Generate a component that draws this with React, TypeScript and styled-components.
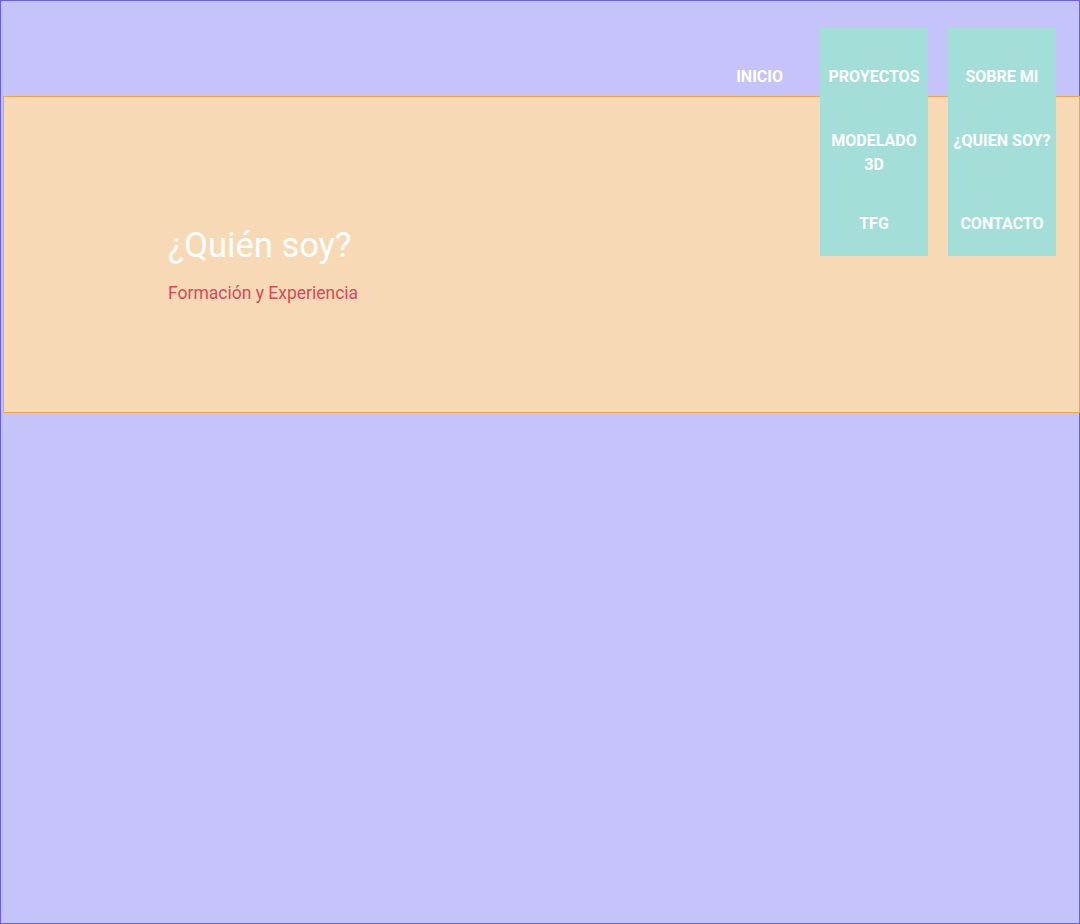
import React from 'react';
import styled, { createGlobalStyle } from 'styled-components';

const GlobalStyle = createGlobalStyle`
  html, body {
    margin: 0;
    padding: 0;
  }
  body {
    font-family: Roboto, "Liberation Sans", Arial, sans-serif;
    background: #c6c2fa;
  }
  * {
    box-sizing: border-box;
  }
`;

const Page = styled.div`
  width: 1080px;
  height: 924px;
  border: 1px solid #6a5cf6;
  background: #c6c2fa;
`;

const Header = styled.header`
  height: 95px;
  position: relative;
  z-index: 2;
`;

const Nav = styled.nav`
  display: flex;
  justify-content: flex-end;
  align-items: flex-start;
  gap: 20px;
  padding: 27px 23px 0 0;
`;

const NavLink = styled.a`
  display: block;
  color: #fff;
  font-weight: 700;
  font-size: 16px;
  line-height: 24px;
  text-align: center;
  text-decoration: none;
  cursor: pointer;
`;

const PlainItem = styled.div`
  padding-top: 37px;
  margin-right: 17px;
`;

const Dropdown = styled.div`
  width: 108px;
  height: 228px;
  background: #a3dfd8;
  display: grid;
  grid-template-rows: 64px 83px 24px;
  padding: 37px 0 20px;
`;

const Hero = styled.section`
  margin-left: 2px;
  width: 1077px;
  height: 317px;
  background: #f7dab5;
  border: 1px solid #f0a443;
  padding: 128px 0 0 164px;
`;

const Title = styled.h1`
  margin: 0;
  color: #fff;
  font-weight: 400;
  font-size: 34.5px;
  line-height: 40px;
`;

const Subtitle = styled.p`
  margin: 17px 0 0;
  color: #d9485c;
  font-size: 17.5px;
  line-height: 22px;
`;

const menus = [
  { label: 'PROYECTOS', items: ['MODELADO 3D', 'TFG'] },
  { label: 'SOBRE MI', items: ['¿QUIEN SOY?', 'CONTACTO'] },
];

const App: React.FC = () => {
  return (
    <Page>
      <GlobalStyle />
      <Header>
        <Nav>
          <PlainItem>
            <NavLink>INICIO</NavLink>
          </PlainItem>
          {menus.map((menu) => (
            <Dropdown key={menu.label}>
              <NavLink>{menu.label}</NavLink>
              {menu.items.map((item) => (
                <NavLink key={item}>{item}</NavLink>
              ))}
            </Dropdown>
          ))}
        </Nav>
      </Header>
      <Hero>
        <Title>¿Quién soy?</Title>
        <Subtitle>Formación y Experiencia</Subtitle>
      </Hero>
    </Page>
  );
};

export default App;
